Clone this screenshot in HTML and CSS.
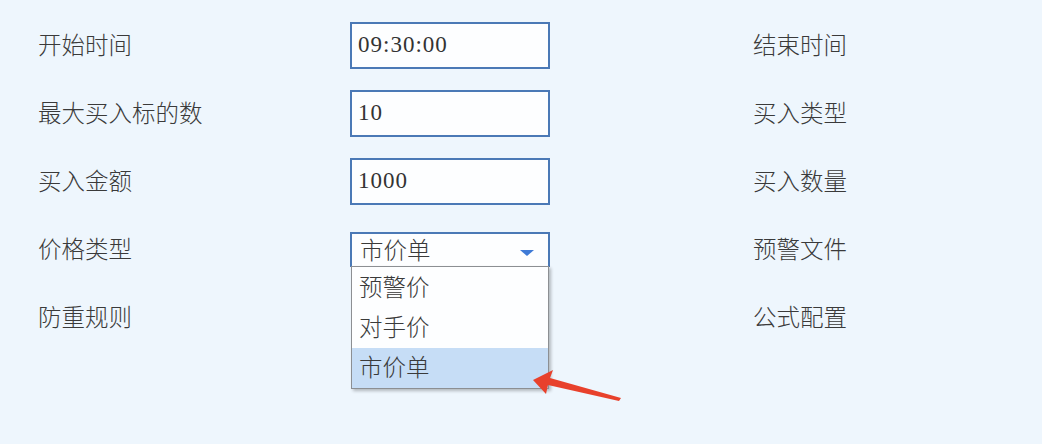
FILE: index.html
```html
<!DOCTYPE html>
<html lang="zh-CN">
<head>
    <meta charset="UTF-8">
    <title>策略参数</title>
    <link rel="stylesheet" href="styles.css">
</head>
<body>
    <div class="form">
        <div class="label">开始时间</div>
        <div class="field"><div class="input">09:30:00</div></div>
        <div class="label">结束时间</div>

        <div class="label">最大买入标的数</div>
        <div class="field"><div class="input">10</div></div>
        <div class="label">买入类型</div>

        <div class="label">买入金额</div>
        <div class="field"><div class="input">1000</div></div>
        <div class="label">买入数量</div>

        <div class="label">价格类型</div>
        <div class="field">
            <div class="select">
                <span>市价单</span>
                <span class="caret"></span>
            </div>
            <div class="options">
                <div class="option">预警价</div>
                <div class="option">对手价</div>
                <div class="option selected">市价单</div>
            </div>
        </div>
        <div class="label">预警文件</div>

        <div class="label">防重规则</div>
        <div class="field"></div>
        <div class="label">公式配置</div>
    </div>

    <svg class="pointer" width="100" height="40" viewBox="0 0 100 40">
        <polygon points="0,12 20,2 17,10 88,30 86,33 15,17 13,26" fill="#e8412c"/>
    </svg>
</body>
</html>
```

FILE: styles.css
```css
body {
    margin: 0;
    background: #eef6fd;
    font-family: "Noto Sans CJK SC", sans-serif;
    font-weight: 300;
    color: #3a3a3a;
    width: 1042px;
    height: 444px;
    overflow: hidden;
    position: relative;
}

.form {
    display: grid;
    grid-template-columns: 312px 403px auto;
    grid-auto-rows: 47px;
    row-gap: 21px;
    padding: 22px 0 0 38px;
}

.label {
    font-size: 23.5px;
    display: flex;
    align-items: center;
    padding-bottom: 4px;
    box-sizing: border-box;
}

.field {
    position: relative;
    display: flex;
    align-items: center;
}

.input {
    box-sizing: border-box;
    width: 200px;
    height: 47px;
    border: 2px solid #4b79b6;
    background: #fdfeff;
    padding: 0 0 2px 6px;
    display: flex;
    align-items: center;
    font-family: "Liberation Serif", serif;
    font-weight: 400;
    font-size: 23px;
    letter-spacing: 1px;
    color: #333;
}

.select {
    box-sizing: border-box;
    width: 200px;
    height: 35px;
    border: 2px solid #4b79b6;
    border-bottom-width: 1px;
    background: #fdfeff;
    padding: 0 14px 3px 8px;
    display: flex;
    align-items: center;
    justify-content: space-between;
    font-size: 23.5px;
}

.caret {
    width: 0;
    height: 0;
    border-left: 7px solid transparent;
    border-right: 7px solid transparent;
    border-top: 6px solid #3f7ad6;
    margin-top: 8px;
}

.options {
    position: absolute;
    top: 40px;
    left: 1px;
    width: 198px;
    box-sizing: border-box;
    border: 1px solid #8c8f93;
    background: #fdfeff;
    box-shadow: 2px 2px 3px rgba(0, 0, 0, 0.25);
    padding-top: 1px;
    z-index: 2;
}

.option {
    height: 40px;
    box-sizing: border-box;
    display: flex;
    align-items: center;
    padding: 0 0 4px 7px;
    font-size: 23.5px;
}

.option.selected {
    background: #c6ddf6;
}

.pointer {
    position: absolute;
    left: 533px;
    top: 368px;
    z-index: 3;
}
```
